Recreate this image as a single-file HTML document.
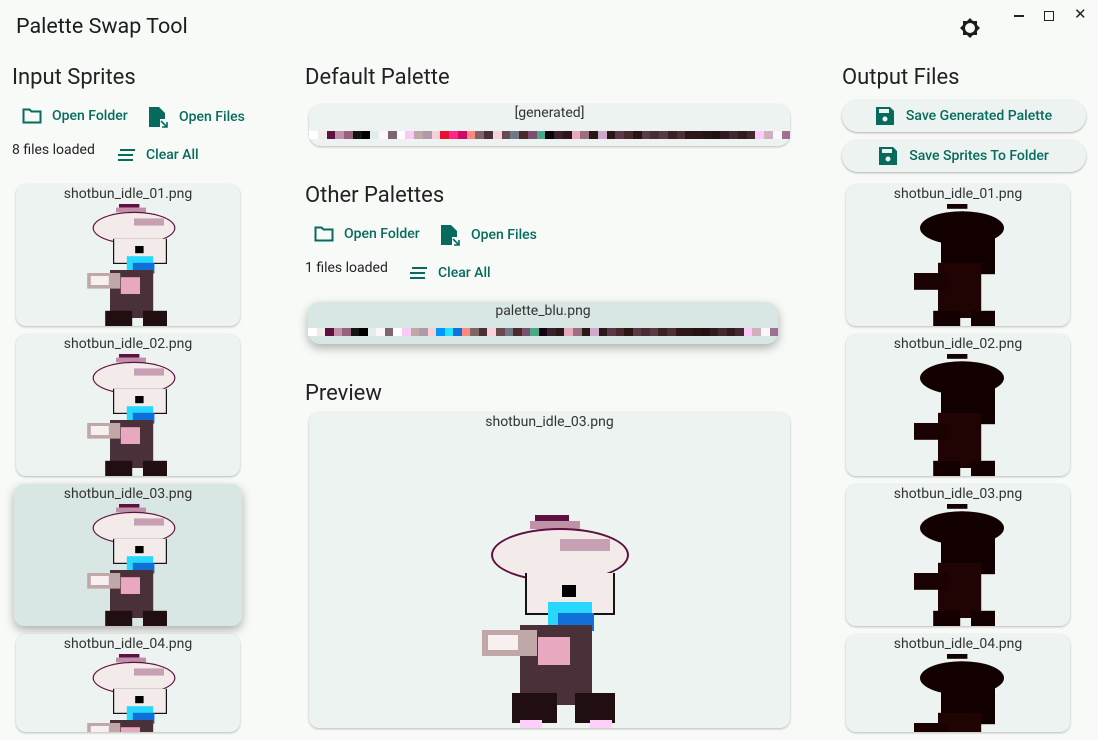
<!DOCTYPE html>
<html><head><meta charset="utf-8"><style>
*{box-sizing:border-box;margin:0;padding:0}
html,body{overflow:hidden}
body{width:1098px;height:740px;background:#f8faf8;font-family:Roboto,"Liberation Sans",sans-serif;color:#1b1c1c;position:relative}
.a{position:absolute}
.t{font-size:21.5px}
.h{font-size:22px;color:#222}
.btn{position:absolute;font-size:14px;color:#066b5d;font-weight:500;display:flex;align-items:center;gap:10px}
.small{position:absolute;font-size:14px;color:#222}
.card{position:absolute;background:#ecf3f1;border-radius:10px;box-shadow:0 1px 2px rgba(0,0,0,.25);overflow:hidden}
.card .n{text-align:center;font-size:14px;color:#333;margin-top:2px;position:relative;z-index:1}
.card svg{position:absolute}
.sel{background:#d8e7e3;box-shadow:0 4px 10px rgba(0,0,0,.3)}
.strip{position:absolute;display:flex;height:8px}
.strip i{flex:1;display:block}
.pill{position:absolute;background:#edf3f1;border-radius:17px;box-shadow:0 1px 2px rgba(0,0,0,.3);height:32px;font-size:14px;color:#066b5d;font-weight:500;display:flex;align-items:center;justify-content:center;gap:12px}
</style></head><body>
<svg width="0" height="0" style="position:absolute">
<defs>
<symbol id="spr" viewBox="0 0 160 215">
<rect x="55" y="0" width="34" height="6" fill="#5e1040"/>
<rect x="50" y="6" width="50" height="8" fill="#c090a8"/>
<ellipse cx="80" cy="40" rx="69" ry="27" fill="#5e1040"/>
<ellipse cx="80" cy="40" rx="67" ry="25" fill="#f3eaea"/>
<rect x="80" y="24" width="50" height="12" fill="#c8a0b4"/>
<rect x="45" y="58" width="90" height="42" fill="#141414"/>
<rect x="47" y="58" width="86" height="40" fill="#f3eaea"/>
<rect x="82" y="70" width="14" height="12" fill="#000"/>
<rect x="68" y="87" width="44" height="30" fill="#28d8fc"/>
<rect x="78" y="98" width="36" height="18" fill="#1070d8"/>
<rect x="40" y="110" width="72" height="80" fill="#4a3038"/>
<rect x="58" y="122" width="32" height="28" fill="#e8a8c0"/>
<rect x="2" y="115" width="55" height="26" fill="#c0a8a8"/>
<rect x="8" y="120" width="30" height="15" fill="#f8f0f0"/>
<rect x="32" y="178" width="45" height="30" fill="#200e10"/>
<rect x="95" y="178" width="40" height="30" fill="#200e10"/>
<rect x="40" y="205" width="22" height="10" fill="#fcd0f8"/>
<rect x="110" y="205" width="22" height="10" fill="#fcd0f8"/>
</symbol>
<symbol id="dk" viewBox="0 0 160 215">
<rect x="55" y="0" width="34" height="8" fill="#150202"/>
<ellipse cx="80" cy="40" rx="70" ry="28" fill="#120000"/>
<rect x="45" y="55" width="90" height="62" fill="#120000"/>
<rect x="40" y="98" width="72" height="92" fill="#200404"/>
<rect x="0" y="115" width="57" height="28" fill="#1a0202"/>
<rect x="32" y="178" width="45" height="37" fill="#150000"/>
<rect x="95" y="178" width="40" height="37" fill="#150000"/>
</symbol>
</defs></svg>

<div class="a t" style="left:16px;top:14px">Palette Swap Tool</div>
<svg class="a" style="left:958px;top:16px" width="24" height="24" viewBox="0 0 24 24"><path d="M12 2l3 3h4v4l3 3-3 3v4h-4l-3 3-3-3H5v-4l-3-3 3-3V5h4z" fill="#1b1c1c"/><circle cx="12" cy="12" r="5" fill="#f8faf8"/></svg>
<div class="a" style="left:1014px;top:15px;width:10px;height:1.5px;background:#222"></div>
<div class="a" style="left:1044px;top:11px;width:10px;height:10px;border:1.5px solid #222"></div>
<div class="a" style="left:1074px;top:5px;font-size:15px;color:#222">✕</div>

<div class="a h" style="left:12px;top:65px">Input Sprites</div>
<div class="btn" style="left:22px;top:107px"><svg width="20" height="18" viewBox="0 0 20 18"><path d="M1.5 2.5h6l2 2h9v11h-17z" fill="none" stroke="#066b5d" stroke-width="2"/></svg>Open Folder</div>
<div class="btn" style="left:149px;top:106px"><svg width="20" height="22" viewBox="0 0 20 22"><path d="M0 1h10l6 6v6h-5v8H0z" fill="#066b5d"/><path d="M12 15l6 6M13 21h5v-5" stroke="#066b5d" stroke-width="1.6" fill="none"/></svg>Open Files</div>
<div class="small" style="left:12px;top:142px">8 files loaded</div>
<div class="btn" style="left:117px;top:147px"><svg width="19" height="14" viewBox="0 0 19 14"><path d="M3 2h15M1 7h15M1 12h15" stroke="#066b5d" stroke-width="2"/></svg>Clear All</div>

<div class="card" style="left:16px;top:184px;width:224px;height:142px"><div class="n">shotbun_idle_01.png</div><svg width="96" height="129" style="left:70px;top:20px"><use href="#spr"/></svg></div>
<div class="card" style="left:16px;top:334px;width:224px;height:142px"><div class="n">shotbun_idle_02.png</div><svg width="96" height="129" style="left:70px;top:20px"><use href="#spr"/></svg></div>
<div class="card sel" style="left:14px;top:484px;width:228px;height:142px"><div class="n">shotbun_idle_03.png</div><svg width="96" height="129" style="left:72px;top:20px"><use href="#spr"/></svg></div>
<div class="card" style="left:16px;top:634px;width:224px;height:98px"><div class="n">shotbun_idle_04.png</div><svg width="96" height="129" style="left:70px;top:20px"><use href="#spr"/></svg></div>

<div class="a h" style="left:305px;top:65px">Default Palette</div>
<div class="card" style="left:309px;top:104px;width:481px;height:42px;border-radius:12px"><div class="n" style="margin-top:1px">[generated]</div></div>

<div class="a h" style="left:305px;top:183px">Other Palettes</div>
<div class="btn" style="left:314px;top:225px"><svg width="20" height="18" viewBox="0 0 20 18"><path d="M1.5 2.5h6l2 2h9v11h-17z" fill="none" stroke="#066b5d" stroke-width="2"/></svg>Open Folder</div>
<div class="btn" style="left:441px;top:224px"><svg width="20" height="22" viewBox="0 0 20 22"><path d="M0 1h10l6 6v6h-5v8H0z" fill="#066b5d"/><path d="M12 15l6 6M13 21h5v-5" stroke="#066b5d" stroke-width="1.6" fill="none"/></svg>Open Files</div>
<div class="small" style="left:305px;top:260px">1 files loaded</div>
<div class="btn" style="left:409px;top:265px"><svg width="19" height="14" viewBox="0 0 19 14"><path d="M3 2h15M1 7h15M1 12h15" stroke="#066b5d" stroke-width="2"/></svg>Clear All</div>
<div class="card sel" style="left:308px;top:302px;width:470px;height:42px;border-radius:12px"><div class="n" style="margin-top:1px">palette_blu.png</div></div>

<div class="a h" style="left:305px;top:381px">Preview</div>
<div class="card" style="left:309px;top:412px;width:481px;height:316px"><div class="n">shotbun_idle_03.png</div><svg width="160" height="215" style="left:171px;top:103px"><use href="#spr"/></svg></div>

<div class="a h" style="left:842px;top:65px">Output Files</div>
<div class="pill" style="left:842px;top:100px;width:244px"><svg width="18" height="18" viewBox="0 0 18 18"><path d="M0 0h14l4 4v14H0z" fill="#066b5d"/><rect x="3" y="2" width="10" height="4" fill="#edf3f1"/><circle cx="9" cy="12" r="2.5" fill="#edf3f1"/></svg>Save Generated Palette</div>
<div class="pill" style="left:842px;top:140px;width:244px"><svg width="18" height="18" viewBox="0 0 18 18"><path d="M0 0h14l4 4v14H0z" fill="#066b5d"/><rect x="3" y="2" width="10" height="4" fill="#edf3f1"/><circle cx="9" cy="12" r="2.5" fill="#edf3f1"/></svg>Save Sprites To Folder</div>
<div class="card" style="left:846px;top:184px;width:224px;height:142px"><div class="n">shotbun_idle_01.png</div><svg width="96" height="129" style="left:68px;top:20px"><use href="#dk"/></svg></div>
<div class="card" style="left:846px;top:334px;width:224px;height:142px"><div class="n">shotbun_idle_02.png</div><svg width="96" height="129" style="left:68px;top:20px"><use href="#dk"/></svg></div>
<div class="card" style="left:846px;top:484px;width:224px;height:142px"><div class="n">shotbun_idle_03.png</div><svg width="96" height="129" style="left:68px;top:20px"><use href="#dk"/></svg></div>
<div class="card" style="left:846px;top:634px;width:224px;height:98px"><div class="n">shotbun_idle_04.png</div><svg width="96" height="129" style="left:68px;top:20px"><use href="#dk"/></svg></div>

<div class="strip" style="left:309px;top:131px;width:481px">
<i style="background:#fff"></i><i style="background:#f3eaea"></i><i style="background:#5e1040"></i><i style="background:#c090a8"></i><i style="background:#9a6080"></i><i style="background:#141414"></i><i style="background:#000"></i><i style="background:#e0eeee"></i><i style="background:#fdf5fc"></i><i style="background:#7e6670"></i><i style="background:#fff"></i><i style="background:#fcc8f8"></i><i style="background:#c0a8a8"></i><i style="background:#b09aa8"></i><i style="background:#fad0d8"></i><i style="background:#e81030"></i><i style="background:#fc2888"></i><i style="background:#d00868"></i><i style="background:#fc8880"></i><i style="background:#7e6666"></i><i style="background:#4a3038"></i><i style="background:#fad0d8"></i><i style="background:#6a4850"></i><i style="background:#707888"></i><i style="background:#4a2a2a"></i><i style="background:#7a5070"></i><i style="background:#48a888"></i><i style="background:#100010"></i><i style="background:#3a2028"></i><i style="background:#2a1818"></i><i style="background:#e8a8c0"></i><i style="background:#9a7080"></i><i style="background:#2a1818"></i><i style="background:#d0a8c8"></i><i style="background:#2a1818"></i><i style="background:#5a3848"></i><i style="background:#4a2830"></i><i style="background:#2a1414"></i><i style="background:#5a3a44"></i><i style="background:#4a2c34"></i><i style="background:#583a44"></i><i style="background:#3a2224"></i><i style="background:#4c3036"></i><i style="background:#2c1818"></i><i style="background:#2c1818"></i><i style="background:#241414"></i><i style="background:#201010"></i><i style="background:#301c20"></i><i style="background:#442830"></i><i style="background:#301c1c"></i><i style="background:#442830"></i><i style="background:#fccaf8"></i><i style="background:#d0b0c0"></i><i style="background:#f8f8f8"></i><i style="background:#a07090"></i>
</div>
<div class="strip" style="left:308px;top:328px;width:470px">
<i style="background:#fff"></i><i style="background:#f3eaea"></i><i style="background:#5e1040"></i><i style="background:#c090a8"></i><i style="background:#9a6080"></i><i style="background:#141414"></i><i style="background:#000"></i><i style="background:#e0eeee"></i><i style="background:#fdf5fc"></i><i style="background:#7e6670"></i><i style="background:#fff"></i><i style="background:#fcc8f8"></i><i style="background:#c0a8a8"></i><i style="background:#b09aa8"></i><i style="background:#fad0d8"></i><i style="background:#0098fc"></i><i style="background:#28e0fc"></i><i style="background:#1070d8"></i><i style="background:#fc8880"></i><i style="background:#7e6666"></i><i style="background:#4a3038"></i><i style="background:#fad0d8"></i><i style="background:#6a4850"></i><i style="background:#707888"></i><i style="background:#4a2a2a"></i><i style="background:#7a5070"></i><i style="background:#48a888"></i><i style="background:#100010"></i><i style="background:#3a2028"></i><i style="background:#2a1818"></i><i style="background:#e8a8c0"></i><i style="background:#9a7080"></i><i style="background:#2a1818"></i><i style="background:#d0a8c8"></i><i style="background:#2a1818"></i><i style="background:#5a3848"></i><i style="background:#4a2830"></i><i style="background:#2a1414"></i><i style="background:#5a3a44"></i><i style="background:#4a2c34"></i><i style="background:#583a44"></i><i style="background:#3a2224"></i><i style="background:#4c3036"></i><i style="background:#2c1818"></i><i style="background:#2c1818"></i><i style="background:#241414"></i><i style="background:#201010"></i><i style="background:#301c20"></i><i style="background:#442830"></i><i style="background:#301c1c"></i><i style="background:#442830"></i><i style="background:#fccaf8"></i><i style="background:#d0b0c0"></i><i style="background:#f8f8f8"></i><i style="background:#a07090"></i>
</div>
</body></html>
